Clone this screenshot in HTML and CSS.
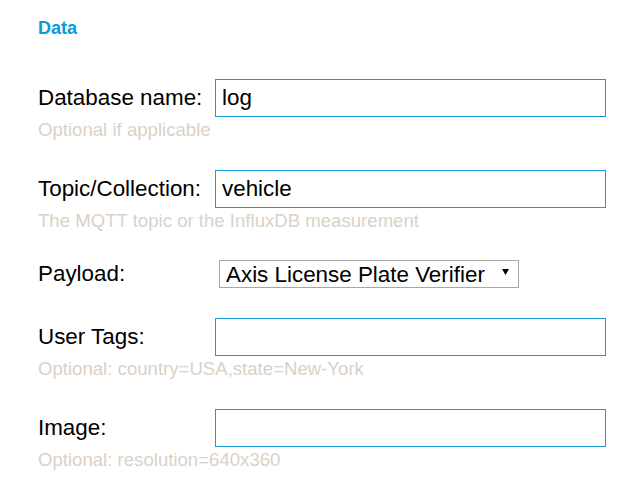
FILE: index.html
```html
<!DOCTYPE html>
<html>
<head>
<meta charset="utf-8">
<link rel="stylesheet" href="styles.css">
</head>
<body>
<div class="page">
  <h2 class="section-title">Data</h2>
  <form class="form">
    <div class="field">
      <div class="row">
        <label class="label" for="db">Database name:</label>
        <input class="input" id="db" type="text" value="log">
      </div>
      <div class="hint">Optional if applicable</div>
    </div>
    <div class="field">
      <div class="row">
        <label class="label" for="topic">Topic/Collection:</label>
        <input class="input" id="topic" type="text" value="vehicle">
      </div>
      <div class="hint">The MQTT topic or the InfluxDB measurement</div>
    </div>
    <div class="field field-select">
      <div class="row row-select">
        <label class="label" for="payload">Payload:</label>
        <div class="select-wrap">
          <select class="select" id="payload">
            <option>Axis License Plate Verifier</option>
          </select>
          <svg class="arrow" width="7" height="6" viewBox="0 0 7 6"><path d="M0 0H7L3.5 6Z" fill="#000"/></svg>
        </div>
      </div>
    </div>
    <div class="field">
      <div class="row">
        <label class="label" for="tags">User Tags:</label>
        <input class="input" id="tags" type="text" value="">
      </div>
      <div class="hint">Optional: country=USA,state=New-York</div>
    </div>
    <div class="field">
      <div class="row">
        <label class="label" for="image">Image:</label>
        <input class="input" id="image" type="text" value="">
      </div>
      <div class="hint">Optional: resolution=640x360</div>
    </div>
  </form>
</div>
</body>
</html>
```

FILE: styles.css
```css
html, body {
  margin: 0;
  padding: 0;
  background: #ffffff;
}
body {
  font-family: "Liberation Sans", Arial, sans-serif;
  color: #000;
}
.page {
  padding: 18px 0 0 38px;
}
.section-title {
  margin: 0;
  font-size: 18px;
  font-weight: bold;
  line-height: 21px;
  color: #0a99d9;
}
.form {
  display: flex;
  flex-direction: column;
  gap: 29px;
  margin-top: 40px;
}
.row {
  display: flex;
  align-items: center;
  height: 38px;
}
.row-select {
  height: 28px;
}
.field-select {
  margin-top: -1px;
  margin-bottom: 1px;
}
.label {
  width: 177px;
  flex: none;
  font-size: 22.4px;
  line-height: 26px;
}
.input {
  box-sizing: border-box;
  width: 391px;
  height: 38px;
  margin: 0;
  border: 1px solid #1a9ad6;
  border-radius: 0;
  padding: 0 6px;
  font-family: "Liberation Sans", Arial, sans-serif;
  font-size: 22.4px;
  color: #000;
  outline: none;
  background: #fff;
}
.hint {
  margin-top: 2px;
  font-size: 18.6px;
  line-height: 22px;
  color: #dbd1c7;
}
.select-wrap {
  position: relative;
  margin-left: 4px;
}
.select {
  display: block;
  box-sizing: border-box;
  width: 300px;
  height: 28px;
  margin: 0;
  border: 1px solid #a6a6a6;
  border-radius: 0;
  padding: 0 0 0 6px;
  font-family: "Liberation Sans", Arial, sans-serif;
  font-size: 22.4px;
  color: #000;
  background: #fff;
  -webkit-appearance: none;
  appearance: none;
  outline: none;
}
.arrow {
  position: absolute;
  right: 10px;
  top: 9px;
  pointer-events: none;
}
```
